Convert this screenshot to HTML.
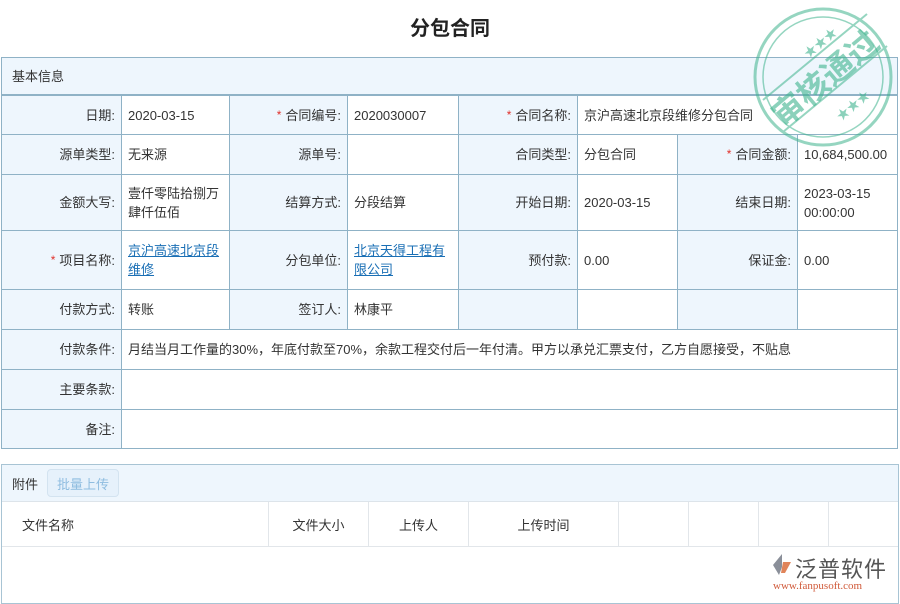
<!DOCTYPE html>
<html><head><meta charset="utf-8"><style>
*{margin:0;padding:0;box-sizing:border-box}
body{width:900px;height:600px;background:#fff;font-family:"Liberation Sans","Noto Sans CJK SC",sans-serif;font-size:13px;color:#333;position:relative;overflow:hidden}
.c{position:absolute;border:1px solid #8fb2c6;display:flex;align-items:center;line-height:19px;margin-left:-1px;margin-top:-1px}
.l{background:#eef6fd;justify-content:flex-end;padding-right:6px;text-align:right}
.v{background:#fff;padding-left:6px;padding-right:4px}
.s{color:#e0302a;margin-right:4px;font-size:12px}
a{color:#1a6fb5;text-decoration:underline}
.t{position:absolute;border-right:1px solid #e2e6ea;top:502px;height:44px;display:flex;align-items:center}
</style></head><body>
<div style="position:absolute;top:12px;left:0;width:900px;text-align:center;font-size:20px;font-weight:bold;color:#222">分包合同</div>

<div class="c" style="left:2px;top:58px;width:897px;height:38px;background:#eef6fd;padding-left:10px">基本信息</div>

<div class="c l" style="left:2px;top:96px;width:121px;height:40px">日期:</div>
<div class="c v" style="left:122px;top:96px;width:109px;height:40px">2020-03-15</div>
<div class="c l" style="left:230px;top:96px;width:119px;height:40px"><span class="s">*</span>合同编号:</div>
<div class="c v" style="left:348px;top:96px;width:112px;height:40px">2020030007</div>
<div class="c l" style="left:459px;top:96px;width:120px;height:40px"><span class="s">*</span>合同名称:</div>
<div class="c v" style="left:578px;top:96px;width:321px;height:40px">京沪高速北京段维修分包合同</div>

<div class="c l" style="left:2px;top:135px;width:121px;height:41px">源单类型:</div>
<div class="c v" style="left:122px;top:135px;width:109px;height:41px">无来源</div>
<div class="c l" style="left:230px;top:135px;width:119px;height:41px">源单号:</div>
<div class="c v" style="left:348px;top:135px;width:112px;height:41px"></div>
<div class="c l" style="left:459px;top:135px;width:120px;height:41px">合同类型:</div>
<div class="c v" style="left:578px;top:135px;width:101px;height:41px">分包合同</div>
<div class="c l" style="left:678px;top:135px;width:121px;height:41px"><span class="s">*</span>合同金额:</div>
<div class="c v" style="left:798px;top:135px;width:101px;height:41px">10,684,500.00</div>

<div class="c l" style="left:2px;top:175px;width:121px;height:57px">金额大写:</div>
<div class="c v" style="left:122px;top:175px;width:109px;height:57px">壹仟零陆拾捌万肆仟伍佰</div>
<div class="c l" style="left:230px;top:175px;width:119px;height:57px">结算方式:</div>
<div class="c v" style="left:348px;top:175px;width:112px;height:57px">分段结算</div>
<div class="c l" style="left:459px;top:175px;width:120px;height:57px">开始日期:</div>
<div class="c v" style="left:578px;top:175px;width:101px;height:57px">2020-03-15</div>
<div class="c l" style="left:678px;top:175px;width:121px;height:57px">结束日期:</div>
<div class="c v" style="left:798px;top:175px;width:101px;height:57px">2023-03-15 00:00:00</div>

<div class="c l" style="left:2px;top:231px;width:121px;height:60px"><span class="s">*</span>项目名称:</div>
<div class="c v" style="left:122px;top:231px;width:109px;height:60px"><a>京沪高速北京段维修</a></div>
<div class="c l" style="left:230px;top:231px;width:119px;height:60px">分包单位:</div>
<div class="c v" style="left:348px;top:231px;width:112px;height:60px"><a>北京天得工程有限公司</a></div>
<div class="c l" style="left:459px;top:231px;width:120px;height:60px">预付款:</div>
<div class="c v" style="left:578px;top:231px;width:101px;height:60px">0.00</div>
<div class="c l" style="left:678px;top:231px;width:121px;height:60px">保证金:</div>
<div class="c v" style="left:798px;top:231px;width:101px;height:60px">0.00</div>

<div class="c l" style="left:2px;top:290px;width:121px;height:41px">付款方式:</div>
<div class="c v" style="left:122px;top:290px;width:109px;height:41px">转账</div>
<div class="c l" style="left:230px;top:290px;width:119px;height:41px">签订人:</div>
<div class="c v" style="left:348px;top:290px;width:112px;height:41px">林康平</div>
<div class="c l" style="left:459px;top:290px;width:120px;height:41px"></div>
<div class="c v" style="left:578px;top:290px;width:101px;height:41px"></div>
<div class="c l" style="left:678px;top:290px;width:121px;height:41px"></div>
<div class="c v" style="left:798px;top:290px;width:101px;height:41px"></div>

<div class="c l" style="left:2px;top:330px;width:121px;height:41px">付款条件:</div>
<div class="c v" style="left:122px;top:330px;width:777px;height:41px">月结当月工作量的30%，年底付款至70%，余款工程交付后一年付清。甲方以承兑汇票支付，乙方自愿接受，不贴息</div>
<div class="c l" style="left:2px;top:370px;width:121px;height:41px">主要条款:</div>
<div class="c v" style="left:122px;top:370px;width:777px;height:41px"></div>
<div class="c l" style="left:2px;top:410px;width:121px;height:40px">备注:</div>
<div class="c v" style="left:122px;top:410px;width:777px;height:40px"></div>

<svg style="position:absolute;left:745px;top:0" width="155" height="155" viewBox="0 0 155 155">
<g opacity="0.55" fill="none" stroke="#3fb48e">
<circle cx="78" cy="77" r="68" stroke-width="3"/>
<circle cx="78" cy="77" r="60" stroke-width="1.5"/>
<line x1="18" y1="100" x2="122" y2="14" stroke-width="2"/>
<line x1="38" y1="132" x2="142" y2="46" stroke-width="2"/>
</g>
<text x="80" y="90" text-anchor="middle" font-size="32" font-weight="bold" fill="#3fb48e" opacity="0.6" transform="rotate(-40 80 78)" font-family="Noto Sans CJK SC,sans-serif">审核通过</text>
<text x="58" y="52" font-size="13" fill="#3fb48e" opacity="0.6" transform="rotate(-40 70 48)">★★★</text>
<text x="90" y="115" font-size="13" fill="#3fb48e" opacity="0.6" transform="rotate(-40 102 110)">★★★</text>
</svg>

<div style="position:absolute;left:1px;top:464px;width:898px;height:140px;border:1px solid #a8c4d4"></div>
<div style="position:absolute;left:2px;top:465px;width:896px;height:37px;background:#eef6fd;border-bottom:1px solid #dde4ea"></div>
<div style="position:absolute;left:12px;top:474px">附件</div>
<div style="position:absolute;left:47px;top:469px;width:72px;height:28px;border:1px solid #d3e3f0;border-radius:4px;background:#e6f1fb;color:#8fbde0;display:flex;align-items:center;justify-content:center">批量上传</div>
<div class="t" style="left:2px;width:267px;padding-left:20px">文件名称</div>
<div class="t" style="left:269px;width:100px;justify-content:center">文件大小</div>
<div class="t" style="left:369px;width:100px;justify-content:center">上传人</div>
<div class="t" style="left:469px;width:150px;justify-content:center">上传时间</div>
<div class="t" style="left:619px;width:70px"></div>
<div class="t" style="left:689px;width:70px"></div>
<div class="t" style="left:759px;width:70px"></div>
<div style="position:absolute;left:2px;top:546px;width:896px;border-top:1px solid #e2e6ea"></div>

<svg style="position:absolute;left:770px;top:553px" width="22" height="24" viewBox="0 0 22 24"><path d="M12 1 L3 12 L9 22 L12 14 Z" fill="#8a8f99"/><path d="M13 9 L21 9 L15 20 L11 20 Z" fill="#e0845a"/></svg>
<div style="position:absolute;left:795px;top:552px;font-size:22px;color:#555;letter-spacing:1px">泛普软件</div>
<div style="position:absolute;left:773px;top:580px;font-size:11px;color:#d05a3a;font-family:'Liberation Serif',serif">www.fanpusoft.com</div>
</body></html>
